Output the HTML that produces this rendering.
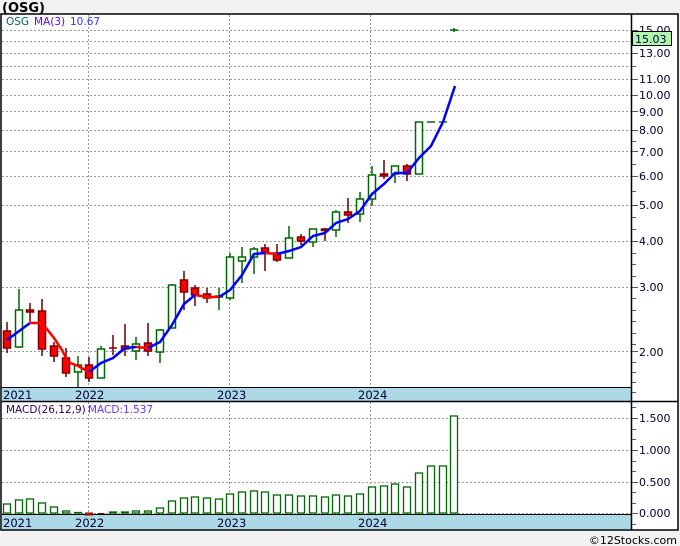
<!DOCTYPE html>
<html><head><meta charset="utf-8"><style>
html,body{margin:0;padding:0;background:#f2f2f2;width:680px;height:546px;overflow:hidden}
svg{display:block}
text{font-family:"DejaVu Sans","Liberation Sans",sans-serif}
</style></head><body>
<svg width="680" height="546" viewBox="0 0 680 546" xmlns="http://www.w3.org/2000/svg">
<rect x="0" y="0" width="680" height="546" fill="#f2f2f2"/>
<text x="2" y="12" font-size="13" font-weight="bold" fill="#000">(OSG)</text>
<rect x="1" y="14" width="677" height="516" fill="#fff" stroke="#000" stroke-width="1.5"/>
<g stroke="#999" stroke-dasharray="2,2" stroke-width="1">
<line x1="2" y1="30.5" x2="631" y2="30.5"/><line x1="2" y1="41.5" x2="631" y2="41.5"/>
<line x1="2" y1="53.5" x2="631" y2="53.5"/><line x1="2" y1="66.5" x2="631" y2="66.5"/>
<line x1="2" y1="79.5" x2="631" y2="79.5"/><line x1="2" y1="95.5" x2="631" y2="95.5"/>
<line x1="2" y1="111.5" x2="631" y2="111.5"/><line x1="2" y1="130.5" x2="631" y2="130.5"/>
<line x1="2" y1="151.5" x2="631" y2="151.5"/><line x1="2" y1="176.5" x2="631" y2="176.5"/>
<line x1="2" y1="205.5" x2="631" y2="205.5"/><line x1="2" y1="241.5" x2="631" y2="241.5"/>
<line x1="2" y1="287.5" x2="631" y2="287.5"/><line x1="2" y1="351.5" x2="631" y2="351.5"/>
<line x1="88.5" y1="15" x2="88.5" y2="388"/><line x1="229.5" y1="15" x2="229.5" y2="388"/><line x1="370.5" y1="15" x2="370.5" y2="388"/>
<line x1="2" y1="418.5" x2="631" y2="418.5"/><line x1="2" y1="450.5" x2="631" y2="450.5"/>
<line x1="2" y1="482.5" x2="631" y2="482.5"/><line x1="2" y1="513.5" x2="631" y2="513.5"/>
<line x1="88.5" y1="402" x2="88.5" y2="515"/><line x1="229.5" y1="402" x2="229.5" y2="515"/><line x1="370.5" y1="402" x2="370.5" y2="515"/>
</g>
<g stroke-width="1.5">
<g stroke="#660000"><line x1="7" y1="322" x2="7" y2="353"/><line x1="30" y1="303" x2="30" y2="322"/><line x1="42" y1="299" x2="42" y2="356"/><line x1="54" y1="342" x2="54" y2="362"/><line x1="66" y1="348" x2="66" y2="377"/><line x1="89" y1="357" x2="89" y2="382"/><line x1="113" y1="335" x2="113" y2="355"/><line x1="125" y1="324" x2="125" y2="356"/><line x1="148" y1="323" x2="148" y2="356"/><line x1="184" y1="271" x2="184" y2="310"/><line x1="195" y1="285" x2="195" y2="306"/><line x1="207" y1="288" x2="207" y2="303"/><line x1="265" y1="244" x2="265" y2="271"/><line x1="277" y1="244" x2="277" y2="262"/><line x1="301" y1="234" x2="301" y2="245"/><line x1="325" y1="228" x2="325" y2="241"/><line x1="348" y1="198" x2="348" y2="223"/><line x1="384" y1="160" x2="384" y2="179"/><line x1="407" y1="164" x2="407" y2="181"/></g>
<g stroke="#006600"><line x1="19" y1="289" x2="19" y2="348"/><line x1="78" y1="356" x2="78" y2="387"/><line x1="101" y1="346" x2="101" y2="378"/><line x1="136" y1="337" x2="136" y2="360"/><line x1="160" y1="329" x2="160" y2="363"/><line x1="172" y1="284" x2="172" y2="328"/><line x1="219" y1="288" x2="219" y2="310"/><line x1="230" y1="253" x2="230" y2="300"/><line x1="242" y1="247" x2="242" y2="283"/><line x1="254" y1="247" x2="254" y2="274"/><line x1="289" y1="226" x2="289" y2="258"/><line x1="313" y1="229" x2="313" y2="247"/><line x1="336" y1="210" x2="336" y2="237"/><line x1="360" y1="192" x2="360" y2="222"/><line x1="372" y1="166" x2="372" y2="206"/><line x1="395" y1="166" x2="395" y2="183"/></g>
<g fill="#ff0000" stroke="#800000"><rect x="3.5" y="331" width="7" height="17"/><rect x="26.5" y="310" width="7" height="2"/><rect x="38.5" y="311" width="7" height="38"/><rect x="50.5" y="346" width="7" height="10"/><rect x="62.5" y="358" width="7" height="15"/><rect x="85.5" y="365" width="7" height="13"/><rect x="121.5" y="346" width="7" height="3"/><rect x="144.5" y="343" width="7" height="8"/><rect x="180.5" y="280" width="7" height="12"/><rect x="191.5" y="288" width="7" height="7"/><rect x="203.5" y="294" width="7" height="4"/><rect x="261.5" y="248" width="7" height="4"/><rect x="273.5" y="253" width="7" height="7"/><rect x="297.5" y="237" width="7" height="4"/><rect x="321.5" y="229" width="7" height="1.5"/><rect x="344.5" y="212" width="7" height="3"/><rect x="380.5" y="174" width="7" height="2"/><rect x="403.5" y="166" width="7" height="8"/><line x1="109" y1="348" x2="117" y2="348"/></g>
<g fill="#fff" stroke="#006600"><rect x="15.5" y="310" width="7" height="37"/><rect x="74.5" y="365" width="7" height="7"/><rect x="97.5" y="349" width="7" height="29"/><rect x="132.5" y="344" width="7" height="7"/><rect x="156.5" y="330" width="7" height="22"/><rect x="168.5" y="285" width="7" height="43"/><rect x="226.5" y="257" width="7" height="41"/><rect x="238.5" y="257" width="7" height="4"/><rect x="250.5" y="249" width="7" height="8"/><rect x="285.5" y="238" width="7" height="20"/><rect x="309.5" y="229" width="7" height="13"/><rect x="332.5" y="212" width="7" height="18"/><rect x="356.5" y="199" width="7" height="15"/><rect x="368.5" y="175" width="7" height="24"/><rect x="391.5" y="166" width="7" height="8"/><rect x="415.5" y="122" width="7" height="52"/><rect x="215.5" y="296" width="7" height="1"/>
<line x1="427" y1="122" x2="435" y2="122"/><line x1="439" y1="122" x2="447" y2="122"/><line x1="450" y1="30" x2="458" y2="30"/><line x1="454" y1="28" x2="454" y2="32"/></g>
</g>
<polyline fill="none" stroke="#0000ff" stroke-width="2.5" points="7,340 30,323"/>
<polyline fill="none" stroke="#ff0000" stroke-width="2.5" points="30,323 42,323 54,338 62,350 68,362 78,366 89,372"/>
<polyline fill="none" stroke="#0000ff" stroke-width="2.5" points="89,372 101,363 113,358 125,348 136,347"/>
<polyline fill="none" stroke="#ff0000" stroke-width="2.5" points="136,347 148,348"/>
<polyline fill="none" stroke="#0000ff" stroke-width="2.5" points="148,348 160,342 172,325 184,304 195,295"/>
<polyline fill="none" stroke="#ff0000" stroke-width="2.5" points="195,295 207,297 219,297"/>
<polyline fill="none" stroke="#0000ff" stroke-width="2.5" points="219,297 230,290 242,275 254,254 265,253"/>
<polyline fill="none" stroke="#ff0000" stroke-width="2.5" points="265,253 277,254"/>
<polyline fill="none" stroke="#0000ff" stroke-width="2.5" points="277,254 289,251 301,247 313,236 325,233 336,223 348,219 360,211 372,194 384,184 395,173 407,173 419,158 431,146 443,122 455,86"/>
<text x="6" y="25" font-size="10.5" fill="#006666">OSG</text>
<text x="34" y="25" font-size="10.5" fill="#6600ff">MA(3)</text>
<text x="70" y="25" font-size="10.5" fill="#3333ff">10.67</text>
<rect x="2" y="388" width="629" height="13" fill="#add8e6"/>
<line x1="1" y1="401.5" x2="678" y2="401.5" stroke="#000" stroke-width="1.5"/>
<line x1="1" y1="387.5" x2="631" y2="387.5" stroke="#000" stroke-width="1"/>
<g font-size="11.5" fill="#000033"><text x="3" y="399">2021</text><text x="75" y="399">2022</text><text x="217" y="399">2023</text><text x="358" y="399">2024</text></g>
<rect x="2" y="515" width="629" height="14" fill="#add8e6"/>
<line x1="2" y1="514.5" x2="631" y2="514.5" stroke="#000" stroke-width="1"/>
<g font-size="11.5" fill="#000033"><text x="3" y="527">2021</text><text x="75" y="527">2022</text><text x="217" y="527">2023</text><text x="358" y="527">2024</text></g>
<text x="6" y="413" font-size="10.5" fill="#330066">MACD(26,12,9)</text>
<text x="88" y="413" font-size="10.5" fill="#6633ff">MACD:1.537</text>
<g fill="#fff" stroke="#006600" stroke-width="1.3">
<rect x="3.5" y="504" width="7" height="9"/><rect x="15.5" y="500" width="7" height="13"/><rect x="26.5" y="499" width="7" height="14"/><rect x="38.5" y="503" width="7" height="10"/><rect x="50.5" y="507" width="7" height="6"/><rect x="62.5" y="511" width="7" height="2"/><rect x="74.5" y="512.5" width="7" height="0.5"/>
<rect x="109.5" y="512" width="7" height="1" fill="#006600"/><rect x="121.5" y="512" width="7" height="1"/><rect x="132.5" y="511" width="7" height="2"/><rect x="144.5" y="511" width="7" height="2"/><rect x="156.5" y="508" width="7" height="5"/><rect x="168.5" y="501" width="7" height="12"/><rect x="180.5" y="498" width="7" height="15"/><rect x="191.5" y="497" width="7" height="16"/><rect x="203.5" y="498" width="7" height="15"/><rect x="215.5" y="499" width="7" height="14"/><rect x="226.5" y="494" width="7" height="19"/><rect x="238.5" y="492" width="7" height="21"/><rect x="250.5" y="491" width="7" height="22"/><rect x="261.5" y="492" width="7" height="21"/><rect x="273.5" y="495" width="7" height="18"/><rect x="285.5" y="495" width="7" height="18"/><rect x="297.5" y="496" width="7" height="17"/><rect x="309.5" y="496" width="7" height="17"/><rect x="321.5" y="497" width="7" height="16"/><rect x="332.5" y="495" width="7" height="18"/><rect x="344.5" y="496" width="7" height="17"/><rect x="356.5" y="494" width="7" height="19"/><rect x="368.5" y="487" width="7" height="26"/><rect x="380.5" y="486" width="7" height="27"/><rect x="391.5" y="484" width="7" height="29"/><rect x="403.5" y="487" width="7" height="26"/><rect x="415.5" y="473" width="7" height="40"/><rect x="427.5" y="466" width="7" height="47"/><rect x="439.5" y="466" width="7" height="47"/><rect x="450.5" y="416" width="7" height="97"/>
</g>
<rect x="85.5" y="513" width="7" height="2" fill="#ff0000" stroke="#800000"/>
<rect x="97.5" y="513" width="7" height="1" fill="#800000"/>
<line x1="631.5" y1="14" x2="631.5" y2="530" stroke="#000" stroke-width="1.5"/>
<g stroke="#555" stroke-width="1">
<line x1="632" y1="30.5" x2="638" y2="30.5"/><line x1="632" y1="41.5" x2="636" y2="41.5"/><line x1="632" y1="53.5" x2="638" y2="53.5"/><line x1="632" y1="66.5" x2="636" y2="66.5"/><line x1="632" y1="79.5" x2="638" y2="79.5"/><line x1="632" y1="95.5" x2="638" y2="95.5"/><line x1="632" y1="111.5" x2="638" y2="111.5"/><line x1="632" y1="130.5" x2="638" y2="130.5"/><line x1="632" y1="141.5" x2="636" y2="141.5"/><line x1="632" y1="151.5" x2="638" y2="151.5"/><line x1="632" y1="164.5" x2="636" y2="164.5"/><line x1="632" y1="176.5" x2="638" y2="176.5"/><line x1="632" y1="191.5" x2="636" y2="191.5"/><line x1="632" y1="205.5" x2="638" y2="205.5"/><line x1="632" y1="217.5" x2="636" y2="217.5"/><line x1="632" y1="229.5" x2="636" y2="229.5"/><line x1="632" y1="241.5" x2="638" y2="241.5"/><line x1="632" y1="253.5" x2="636" y2="253.5"/><line x1="632" y1="264.5" x2="636" y2="264.5"/><line x1="632" y1="276.5" x2="636" y2="276.5"/><line x1="632" y1="287.5" x2="638" y2="287.5"/><line x1="632" y1="298.5" x2="636" y2="298.5"/><line x1="632" y1="310.5" x2="636" y2="310.5"/><line x1="632" y1="321.5" x2="636" y2="321.5"/><line x1="632" y1="333.5" x2="636" y2="333.5"/><line x1="632" y1="344.5" x2="636" y2="344.5"/><line x1="632" y1="351.5" x2="638" y2="351.5"/><line x1="632" y1="362.5" x2="636" y2="362.5"/><line x1="632" y1="372.5" x2="636" y2="372.5"/><line x1="632" y1="382.5" x2="636" y2="382.5"/><line x1="632" y1="392.5" x2="636" y2="392.5"/>
<line x1="632" y1="407.5" x2="636" y2="407.5"/><line x1="632" y1="418.5" x2="638" y2="418.5"/><line x1="632" y1="429.5" x2="636" y2="429.5"/><line x1="632" y1="439.5" x2="636" y2="439.5"/><line x1="632" y1="450.5" x2="638" y2="450.5"/><line x1="632" y1="461.5" x2="636" y2="461.5"/><line x1="632" y1="471.5" x2="636" y2="471.5"/><line x1="632" y1="482.5" x2="638" y2="482.5"/><line x1="632" y1="492.5" x2="636" y2="492.5"/><line x1="632" y1="503.5" x2="636" y2="503.5"/><line x1="632" y1="513.5" x2="638" y2="513.5"/><line x1="632" y1="524.5" x2="636" y2="524.5"/>
</g>
<g font-size="11" fill="#000033">
<text x="639" y="34">15.00</text><text x="639" y="57">13.00</text><text x="639" y="83">11.00</text><text x="639" y="99">10.00</text><text x="639" y="116">9.00</text><text x="639" y="134">8.00</text><text x="639" y="156">7.00</text><text x="639" y="180">6.00</text><text x="639" y="209">5.00</text><text x="639" y="245">4.00</text><text x="639" y="291">3.00</text><text x="639" y="356">2.00</text>
<text x="639" y="422">1.500</text><text x="639" y="454">1.000</text><text x="639" y="486">0.500</text><text x="639" y="517">0.000</text>
</g>
<rect x="632.5" y="31.5" width="39" height="14" fill="#b0f5b0" stroke="#000" stroke-width="1"/>
<text x="635" y="43" font-size="11" fill="#000033">15.03</text>
<text x="677" y="544" font-size="11" fill="#000" text-anchor="end">©12Stocks.com</text>
</svg>
</body></html>
